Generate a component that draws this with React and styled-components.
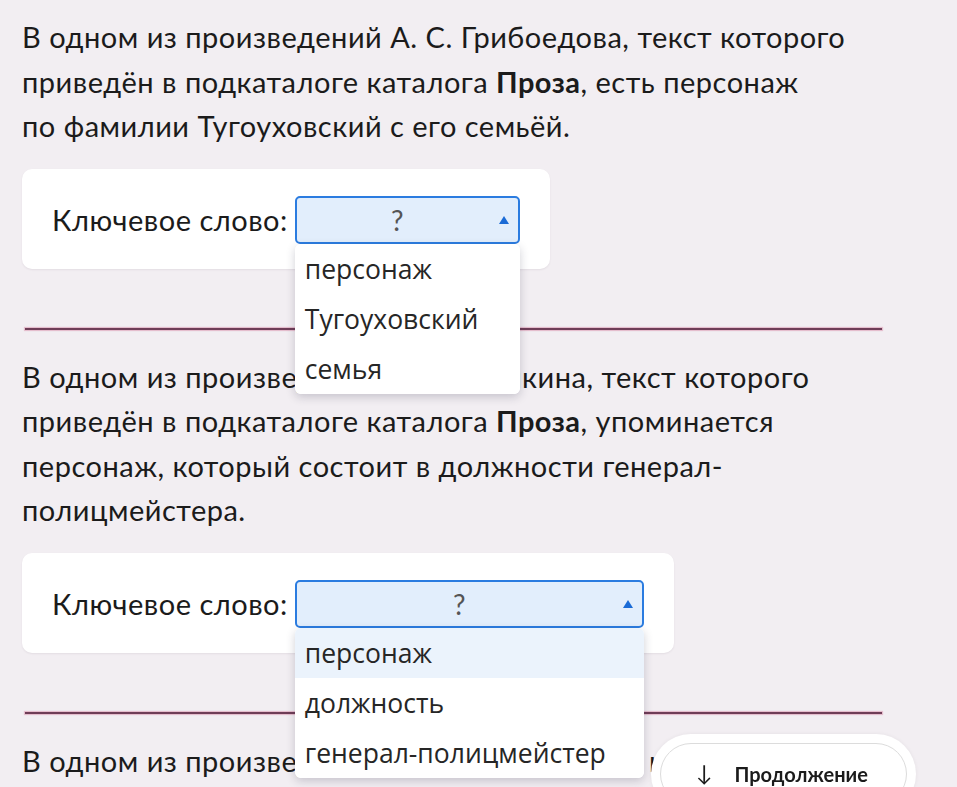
import styled, { createGlobalStyle } from "styled-components";

const questions = [
  {
    lines: [
      <>В одном из произведений А. С. Грибоедова, текст которого</>,
      <>
        приведён в подкаталоге каталога <b>Проза</b>, есть персонаж
      </>,
      <>по фамилии Тугоуховский с его семьёй.</>,
    ],
    width: 225,
    options: ["персонаж", "Тугоуховский", "семья"],
    active: -1,
  },
  {
    lines: [
      <>В одном из произведений А. С. Пушкина, текст которого</>,
      <>
        приведён в подкаталоге каталога <b>Проза</b>, упоминается
      </>,
      <>персонаж, который состоит в должности генерал-</>,
      <>полицмейстера.</>,
    ],
    width: 349,
    options: ["персонаж", "должность", "генерал-полицмейстер"],
    active: 0,
  },
];

export default function App() {
  return (
    <>
      <Global />
      <Page>
        {questions.map((q, i) => (
          <Block key={i}>
            <Question>
              {q.lines.map((line, j) => (
                <Line key={j}>{line}</Line>
              ))}
            </Question>
            <Card>
              <Label>Ключевое слово:</Label>
              <Select width={q.width}>
                <Value>?</Value>
                <Caret />
                <Menu>
                  {q.options.map((opt, k) => (
                    <Option key={k} active={k === q.active}>
                      {opt}
                    </Option>
                  ))}
                </Menu>
              </Select>
            </Card>
            <Divider />
          </Block>
        ))}
        <Question>
          <Line>В одном из произведений Н. В. Гоголя, текст которого</Line>
          <Line>приведён в подкаталоге каталога <b>Проза</b>, есть</Line>
        </Question>
      </Page>
      <MoreButton>
        <Arrow>↓</Arrow>
        Продолжение
      </MoreButton>
    </>
  );
}

const Global = createGlobalStyle`
  html, body {
    margin: 0;
    background: #f2eef2;
  }
  body {
    font-family: Lato, "Noto Sans", sans-serif;
    color: #1b1b1b;
  }
`;

const Page = styled.div`
  padding: 15px 75px 40px 22px;
  display: flex;
  flex-direction: column;
`;

const Block = styled.div`
  display: flex;
  flex-direction: column;
  align-items: flex-start;
`;

const Question = styled.div`
  font-size: 29px;
  letter-spacing: 0.5px;
  line-height: 44.5px;
  b {
    font-weight: 700;
  }
`;

const Line = styled.div`
  white-space: nowrap;
`;

const Card = styled.div`
  margin-top: 20px;
  display: inline-flex;
  align-items: center;
  gap: 7px;
  padding: 27px 30px 25px 30px;
  background: #fff;
  border-radius: 10px;
  box-shadow: 0 1px 2px rgba(60, 40, 60, 0.08);
`;

const Label = styled.span`
  font-size: 29px;
  letter-spacing: 0.5px;
`;

const Select = styled.div`
  position: relative;
  box-sizing: border-box;
  width: ${(p) => p.width}px;
  height: 48px;
  display: flex;
  align-items: center;
  justify-content: center;
  background: #e2eefc;
  border: 2px solid #2b7ce0;
  border-radius: 5px;
`;

const Value = styled.span`
  font-size: 28px;
  color: #555;
  margin-right: 20px;
`;

const Caret = styled.span`
  position: absolute;
  right: 9px;
  top: 18px;
  width: 0;
  height: 0;
  border-left: 5px solid transparent;
  border-right: 5px solid transparent;
  border-bottom: 8px solid #1a6bd6;
`;

const Menu = styled.div`
  position: absolute;
  z-index: 5;
  top: calc(100% + 2px);
  left: -2px;
  right: -2px;
  background: #fff;
  border-radius: 6px;
  overflow: hidden;
  box-shadow: 0 3px 10px rgba(40, 40, 70, 0.22);
`;

const Option = styled.div`
  height: 50px;
  display: flex;
  align-items: center;
  padding-left: 10px;
  font-family: "Open Sans", "Noto Sans", sans-serif;
  font-size: 26.5px;
  color: #262626;
  background: ${(p) => (p.active ? "#ebf3fc" : "#fff")};
`;

const Divider = styled.div`
  align-self: stretch;
  margin: 59px 0 25px 3px;
  height: 2px;
  background: #6f3d57;
  box-shadow: 0 0 1px 1px rgba(214, 130, 160, 0.5);
`;

const MoreButton = styled.div`
  position: fixed;
  left: 660px;
  top: 743px;
  width: 247px;
  height: 62px;
  box-sizing: border-box;
  display: flex;
  align-items: flex-start;
  padding-top: 18px;
  padding-left: 35px;
  gap: 22px;
  background: #fff;
  border: 1px solid #dcdcdc;
  border-radius: 31px;
  box-shadow: 0 0 0 9px #fff, 0 0 4px 9px rgba(0, 0, 0, 0.06);
  font-family: Lato, "Noto Sans", sans-serif;
  font-weight: 700;
  font-size: 20px;
  color: #1b1b1b;
  z-index: 10;
`;

const Arrow = styled.span`
  font-size: 22px;
  line-height: 22px;
  font-weight: 400;
`;
